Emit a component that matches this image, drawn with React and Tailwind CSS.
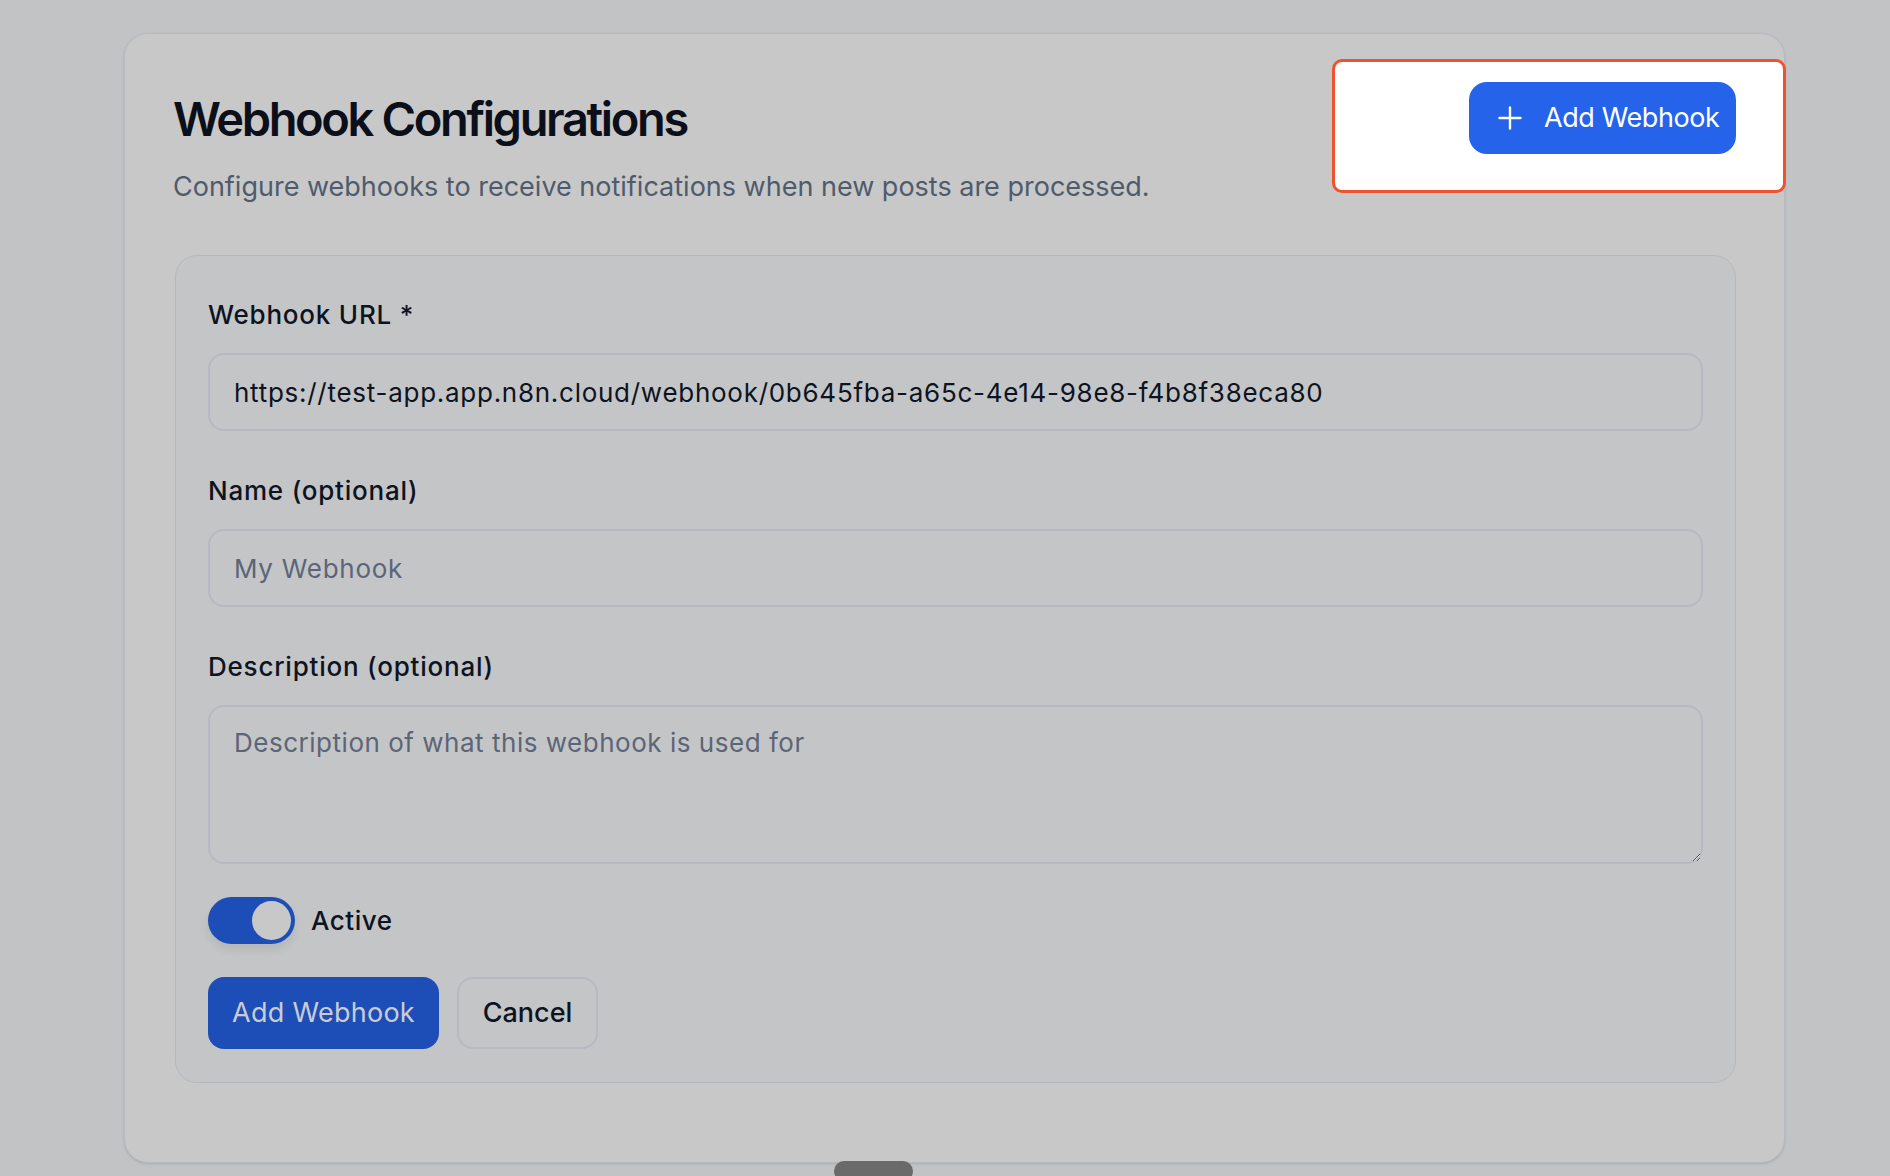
import React, { useState } from "react";

const font = { fontFamily: "Inter, 'Noto Sans', sans-serif" };

const PlusIcon = () => (
  <svg width="24" height="24" viewBox="0 0 24 24" fill="none" stroke="currentColor" strokeWidth="2.4" strokeLinecap="round">
    <path d="M12 1.5v21M1.5 12h21" />
  </svg>
);

const Field = ({ label, children, className = "" }) => (
  <div className={className}>
    <label className="block text-[26px] leading-[36px] font-medium tracking-[0.03em] text-[#0d131f]">{label}</label>
    <div className="mt-[20px]">{children}</div>
  </div>
);

export default function App() {
  const [active, setActive] = useState(true);
  const [url, setUrl] = useState(
    "https://test-app.app.n8n.cloud/webhook/0b645fba-a65c-4e14-98e8-f4b8f38eca80"
  );

  return (
    <div className="relative min-h-[1176px] bg-[#c2c3c5] pt-[33px] overflow-hidden" style={font}>
      <div className="relative ml-[124px] w-[1661px] h-[1130px] rounded-[24px] border border-[#b7bac1] bg-[#c8c8c8] shadow-sm pl-[50px] pr-[48px] pt-[48px]">
        {/* tour highlight */}
        <div className="absolute left-[1207px] top-[25px] w-[454px] h-[134px] rounded-[10px] border-[3px] border-[#f2512f] bg-white" />

        <div className="flex items-start justify-between">
          <div className="pt-[7px] -ml-[2px]">
            <h1 className="text-[47px] leading-[60px] font-semibold tracking-[-0.05em] text-[#0b0f19]">
              Webhook Configurations
            </h1>
            <p className="mt-[18px] text-[27px] leading-[40px] text-[#4f5b6d]">
              Configure webhooks to receive notifications when new posts are processed.
            </p>
          </div>
          <button
            type="button"
            className="relative z-10 flex items-center gap-[22px] h-[72px] w-[267px] rounded-[18px] bg-[#2563eb] pl-[29px] text-white text-[27px] tracking-[-0.015em]"
          >
            <PlusIcon />
            <span>Add Webhook</span>
          </button>
        </div>

        <div className="mt-[48px] rounded-[22px] border border-[#b5b8bf] bg-[#c4c5c7] px-[32px] pt-[41px] pb-[33px]">
          <Field label="Webhook URL *">
            <input
              value={url}
              onChange={(e) => setUrl(e.target.value)}
              className="w-full h-[78px] rounded-[16px] border-2 border-[#b6b9c0] bg-[#c4c5c7] px-[24px] text-[26px] tracking-[0.028em] text-[#0d131f] outline-none"
            />
          </Field>
          <Field label="Name (optional)" className="mt-[42px]">
            <input
              placeholder="My Webhook"
              className="w-full h-[78px] rounded-[16px] border-2 border-[#b6b9c0] bg-[#c4c5c7] px-[24px] text-[26px] tracking-[0.028em] text-[#0d131f] placeholder:text-[#5b6577] outline-none"
            />
          </Field>
          <Field label="Description (optional)" className="mt-[42px]">
            <textarea
              placeholder="Description of what this webhook is used for"
              className="block w-full h-[159px] rounded-[16px] border-2 border-[#b6b9c0] bg-[#c4c5c7] px-[24px] py-[18px] text-[26px] leading-[36px] tracking-[0.02em] text-[#0d131f] placeholder:text-[#5b6577] outline-none"
            />
          </Field>

          <div className="mt-[33px] flex items-center gap-[16px]">
            <button
              type="button"
              onClick={() => setActive(!active)}
              className={`relative h-[47px] w-[87px] rounded-full shadow-[0_6px_10px_rgba(0,0,0,0.08)] ${
                active ? "bg-[#1d4eb8]" : "bg-[#9da3ad]"
              }`}
            >
              <span
                className={`absolute top-[4px] h-[39px] w-[39px] rounded-full bg-[#c8c8c8] ${
                  active ? "left-[44px]" : "left-[4px]"
                }`}
              />
            </button>
            <span className="text-[26px] leading-[36px] font-medium tracking-[0.02em] text-[#0d131f]">Active</span>
          </div>

          <div className="mt-[33px] flex items-center gap-[18px]">
            <button
              type="button"
              className="h-[72px] w-[231px] rounded-[16px] bg-[#1d4eb8] text-[27px] tracking-[0.01em] text-[#c9ccd4]"
            >
              Add Webhook
            </button>
            <button
              type="button"
              className="h-[72px] w-[141px] rounded-[16px] border-2 border-[#b6b9c0] text-[27px] font-medium text-[#0d131f]"
            >
              Cancel
            </button>
          </div>
        </div>
      </div>

      {/* scroll indicator */}
      <div className="absolute left-[834px] top-[1161px] h-[20px] w-[79px] rounded-full bg-[#6a6a6a]" />
    </div>
  );
}
